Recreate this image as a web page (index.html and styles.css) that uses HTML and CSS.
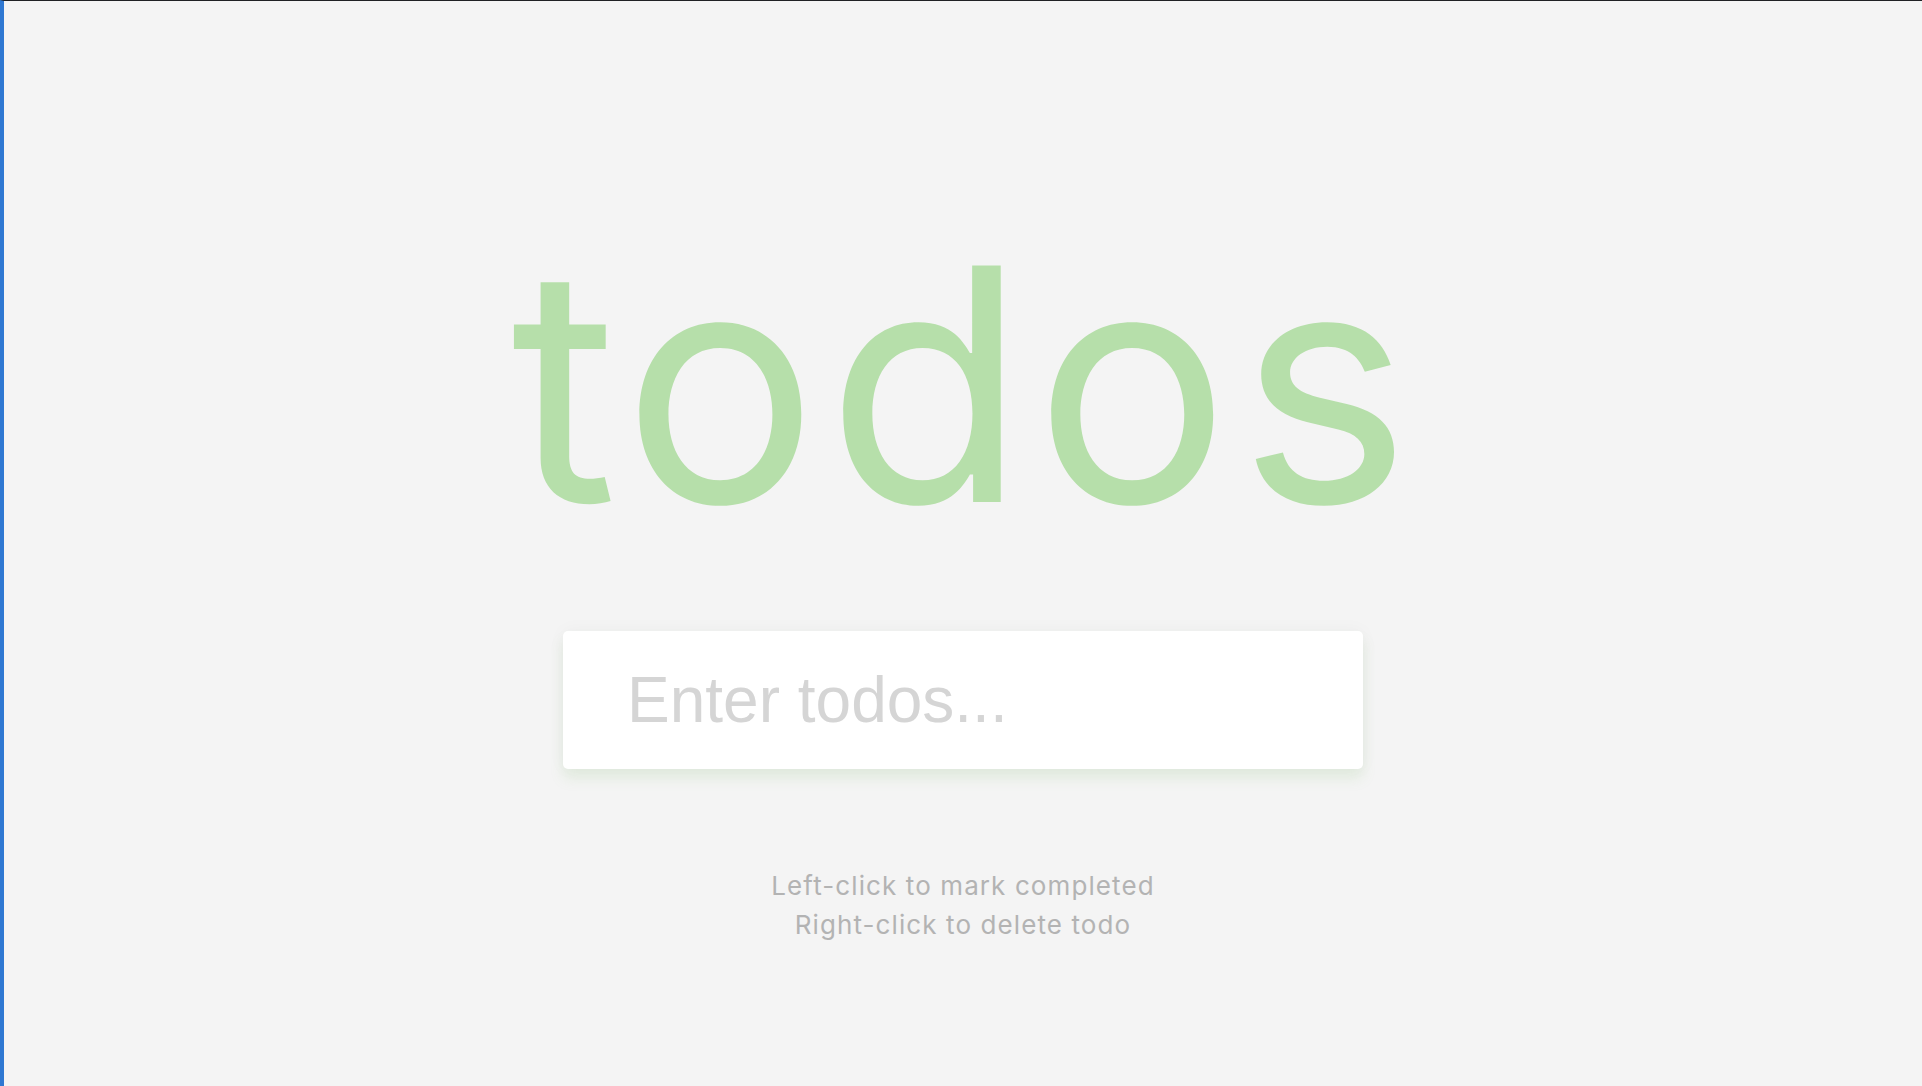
FILE: index.html
```html
<!DOCTYPE html>
<html lang="en">
<head>
<meta charset="UTF-8">
<title>Todos</title>
<link rel="stylesheet" href="styles.css">
</head>
<body>
  <main class="app">
    <h1 class="title">todos</h1>
    <form class="todo-form">
      <input type="text" class="todo-input" placeholder="Enter todos..." autocomplete="off">
    </form>
    <small class="hint">Left-click to mark completed<br>Right-click to delete todo</small>
  </main>
</body>
</html>
```
FILE: styles.css
```css
* {
  box-sizing: border-box;
}

html, body {
  margin: 0;
  padding: 0;
  height: 100%;
}

body {
  background-color: #f4f4f4;
  border-left: 4px solid #2f78d2;
  border-top: 1px solid #202124;
  font-family: "Inter", "Liberation Sans", sans-serif;
  overflow: hidden;
}

.app {
  display: flex;
  flex-direction: column;
  align-items: center;
  padding-top: 220px;
}

.title {
  margin: 0;
  padding-left: 4px;
  font-family: "Inter", sans-serif;
  font-weight: 400;
  font-size: 325px;
  line-height: 1;
  letter-spacing: 9px;
  color: #b6dfaa;
}

.todo-form {
  margin-top: 85px;
}

.todo-input {
  display: block;
  width: 800px;
  height: 138px;
  padding: 32px 64px;
  border: none;
  border-radius: 5px;
  background: #ffffff;
  font-family: "Liberation Sans", Arial, sans-serif;
  font-size: 64px;
  color: #444;
  outline: none;
  box-shadow: 0 0 18px rgba(0, 0, 0, 0.04), 0 10px 14px rgba(120, 190, 100, 0.13);
}

.todo-input::placeholder {
  color: #d5d5d5;
}

.hint {
  display: block;
  margin-top: 97px;
  font-size: 26px;
  line-height: 39px;
  text-align: center;
  color: #b3b3b3;
  letter-spacing: 1.1px;
}
```
